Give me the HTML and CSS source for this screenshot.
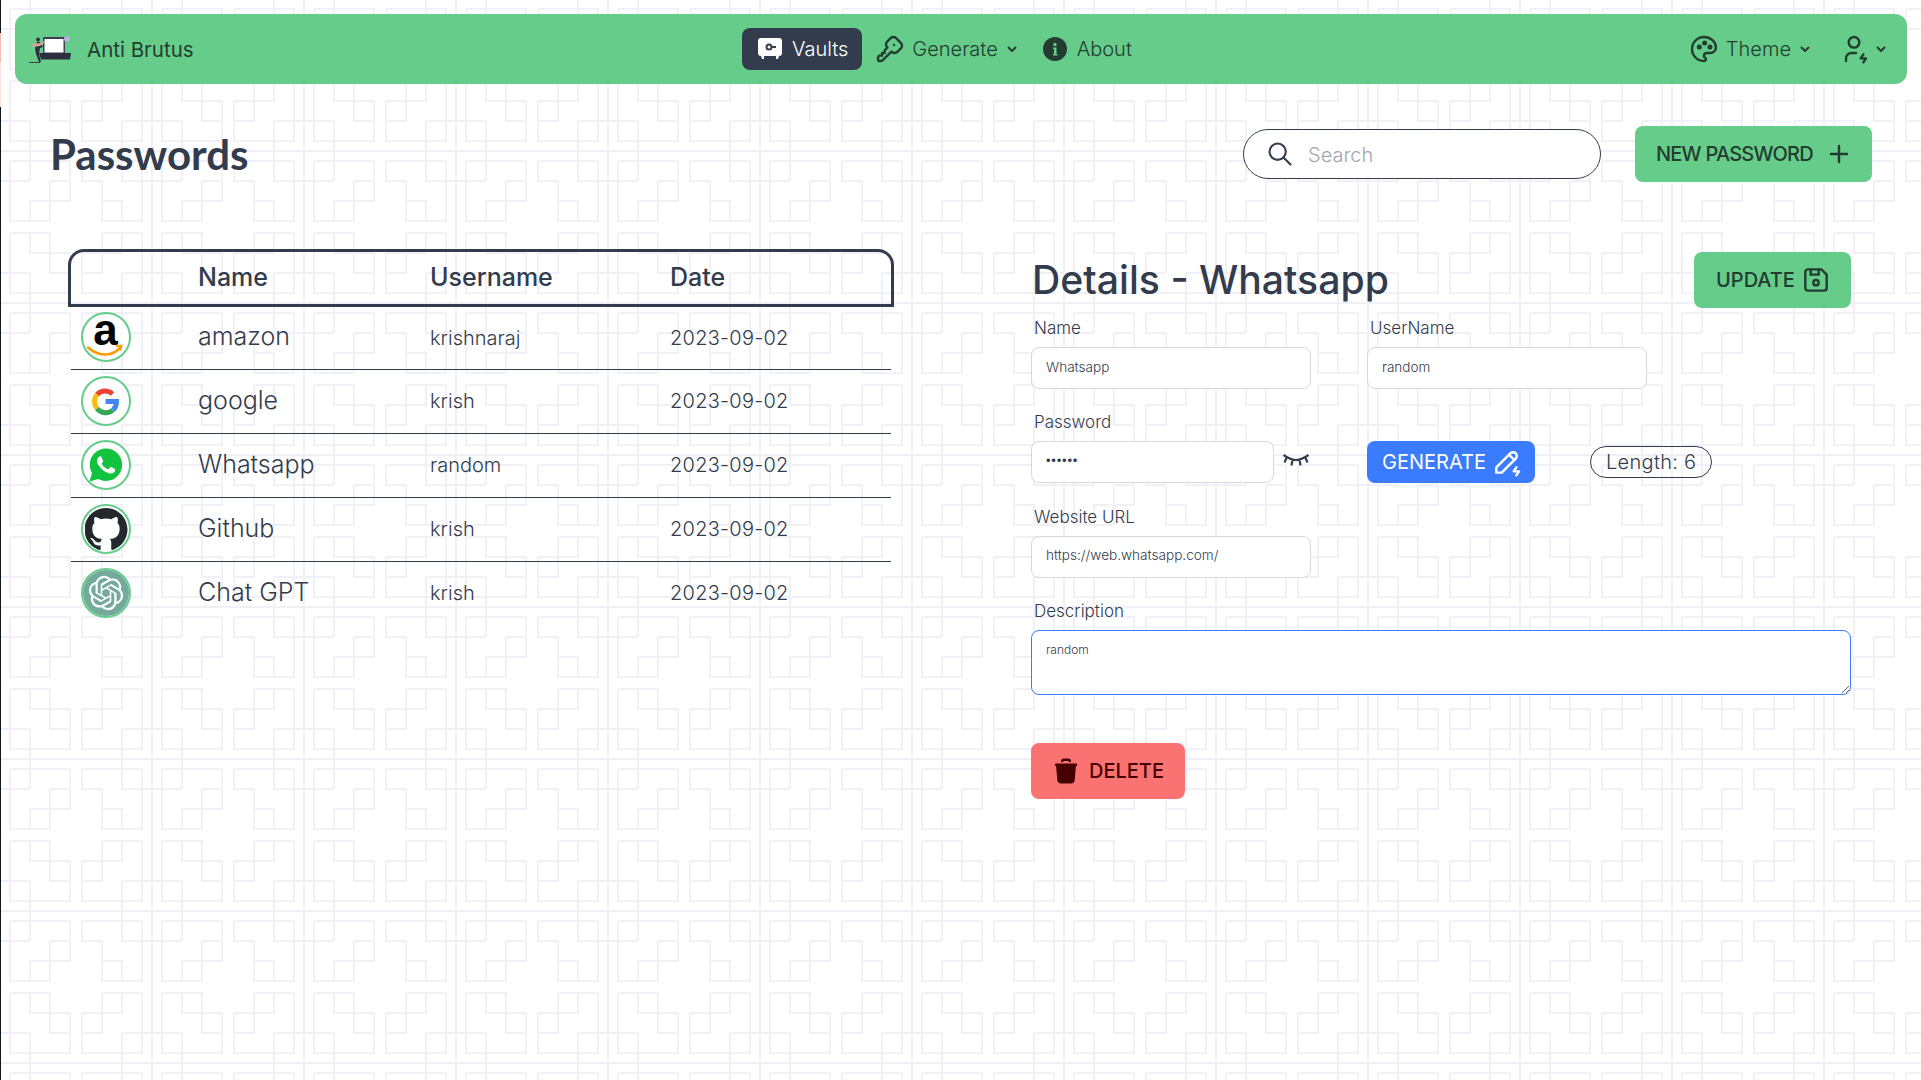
FILE: index.html

```html
<!DOCTYPE html>
<html lang="en">
<head>
    <meta charset="UTF-8">
    <meta name="viewport" content="width=device-width, initial-scale=1.0">
    <title>Anti Brutus</title>
    <link rel="stylesheet" href="styles.css">
</head>
<body>

    <nav class="navbar">
        <div class="nav-start">
            <svg class="logo" viewBox="0 0 42 27">
                <rect x="14" y="1" width="22" height="17" rx="1" fill="#3f3d56"/>
                <rect x="15.5" y="3" width="19" height="13.5" fill="#fff"/>
                <path d="M10 17h32l-1 6.500h-29z" fill="#2f2e41"/>
                <circle cx="38" cy="3" r="3" fill="#b4b4d8"/>
                <circle cx="9" cy="3.500" r="2" fill="#2f2e41"/>
                <path d="M8 6h3l3 5-3 1-1 6 2 8h-2l-3-8-1-6z" fill="#2f2e41"/>
                <path d="M3 8l8-1 4-2 1 1-5 4-7 1z" fill="#d9a594"/>
                <path d="M0 26.500h11" stroke="#3f3d56"/>
            </svg>
            <span class="brand">Anti Brutus</span>
        </div>
        <div class="nav-center">
            <a class="nav-item active">
                <svg class="nav-icon" viewBox="0 0 24 24">
                    <rect x="0" y="1" width="24" height="18" rx="3" fill="#fff"/>
                    <path d="M3 19h3v3h-2zM18 19h3l-1 3h-2z" fill="#fff"/>
                    <circle cx="11" cy="10" r="2.500" fill="none" stroke="#333c4d" stroke-width="2"/>
                    <path d="M13 10h5" stroke="#333c4d" stroke-width="2"/>
                </svg>
                Vaults
            </a>
            <a class="nav-item">
                <svg class="nav-icon line" viewBox="0 0 24 24">
                    <path d="M16.555 3.843l3.602 3.602a2.877 2.877 0 0 1 0 4.069l-2.643 2.643a2.877 2.877 0 0 1 -4.069 0l-.301 -.301l-6.558 6.558a2 2 0 0 1 -1.239 .578l-.175 .008h-1.172a1 1 0 0 1 -.993 -.883l-.007 -.117v-1.172a2 2 0 0 1 .467 -1.284l.119 -.13l.414 -.414h2v-2h2v-2l2.144 -2.144l-.301 -.301a2.877 2.877 0 0 1 0 -4.069l2.643 -2.643a2.877 2.877 0 0 1 4.069 0z"/>
                    <path d="M15 9h.01"/>
                </svg>
                Generate
                <svg class="chevron" viewBox="0 0 10 6"><path d="M1 1l4 4 4-4"/></svg>
            </a>
            <a class="nav-item">
                <svg class="nav-icon" viewBox="0 0 24 24">
                    <circle cx="12" cy="12" r="12" fill="#223d30"/>
                    <circle cx="12" cy="7.500" r="1.700" fill="#66cc8a"/>
                    <path d="M10 10.500h3.500v6.500h1v1.500h-4.500v-1.500h1v-5h-1z" fill="#66cc8a"/>
                </svg>
                About
            </a>
        </div>
        <div class="nav-end">
            <a class="nav-item">
                <svg class="nav-icon line" viewBox="0 0 24 24">
                    <path d="M12 21a9 9 0 0 1 0 -18c4.970 0 9 3.582 9 8c0 1.060 -.474 2.078 -1.318 2.828c-.844 .75 -1.989 1.172 -3.182 1.172h-2.500a2 2 0 0 0 -1 3.750a1.300 1.300 0 0 1 -1 2.250"/>
                    <path d="M8.500 10.500m-1 0a1 1 0 1 0 2 0a1 1 0 1 0 -2 0"/>
                    <path d="M12.500 7.500m-1 0a1 1 0 1 0 2 0a1 1 0 1 0 -2 0"/>
                    <path d="M16.500 10.500m-1 0a1 1 0 1 0 2 0a1 1 0 1 0 -2 0"/>
                </svg>
                Theme
                <svg class="chevron" viewBox="0 0 10 6"><path d="M1 1l4 4 4-4"/></svg>
            </a>
            <a class="nav-item user-menu">
                <svg class="nav-icon line" viewBox="0 0 24 24">
                    <path d="M8 7a4 4 0 1 0 8 0a4 4 0 0 0 -8 0"/>
                    <path d="M6 21v-2a4 4 0 0 1 4 -4h3.500"/>
                    <path d="M19 16l-2 3h4l-2 3"/>
                </svg>
                <svg class="chevron" viewBox="0 0 10 6"><path d="M1 1l4 4 4-4"/></svg>
            </a>
        </div>
    </nav>

    <header class="page-header">
        <h1>Passwords</h1>
        <label class="search">
            <svg class="search-icon line" viewBox="0 0 24 24">
                <path d="M10 10m-7 0a7 7 0 1 0 14 0a7 7 0 1 0 -14 0"/>
                <path d="M21 21l-6 -6"/>
            </svg>
            <input type="text" placeholder="Search">
        </label>
        <button class="btn btn-primary new-btn">
            NEW PASSWORD
            <svg class="btn-icon line" viewBox="0 0 24 24"><path d="M12 6v12M6 12h12"/></svg>
        </button>
    </header>

    <main class="content">
        <section class="vault">
            <table class="vault-table">
                <colgroup>
                    <col class="col-logo">
                    <col class="col-name">
                    <col class="col-user">
                    <col class="col-date">
                </colgroup>
                <thead>
                    <tr>
                        <th></th>
                        <th>Name</th>
                        <th>Username</th>
                        <th>Date</th>
                    </tr>
                </thead>
                <tbody>
                    <tr>
                        <td class="cell-logo">
                            <div class="avatar">
                                <svg class="icon-amazon" viewBox="0 0 46 46">
                                    <text class="amazon-a" x="22.500" y="30.500" text-anchor="middle">a</text>
                                    <path d="M5 33.500c9 8 24 11 33-1" fill="none" stroke="#f90" stroke-width="2.500" stroke-linecap="round"/>
                                    <path d="M33 32l5.500-.5-1 5" fill="none" stroke="#f90" stroke-width="1.800"/>
                                </svg>
                            </div>
                        </td>
                        <td class="cell-name">amazon</td>
                        <td class="cell-text">krishnaraj</td>
                        <td class="cell-text cell-date">2023-09-02</td>
                    </tr>
                    <tr>
                        <td class="cell-logo">
                            <div class="avatar">
                                <svg viewBox="0 0 46 46" fill="none" stroke-width="5">
                                    <g transform="translate(-1 .5)">
                                        <path d="M30.500 15.500a11 11 0 0 0-15.500 .5" stroke="#ea4335"/>
                                        <path d="M15 16a11 11 0 0 0 0 14" stroke="#fbbc05"/>
                                        <path d="M15 30a11 11 0 0 0 16 1.500" stroke="#34a853"/>
                                        <path d="M31 31.500a11 11 0 0 0 3.500-8.500h-11" stroke="#4285f4"/>
                                    </g>
                                </svg>
                            </div>
                        </td>
                        <td class="cell-name">google</td>
                        <td class="cell-text">krish</td>
                        <td class="cell-text cell-date">2023-09-02</td>
                    </tr>
                    <tr>
                        <td class="cell-logo">
                            <div class="avatar">
                                <svg class="icon-whatsapp" viewBox="0 0 24 24">
                                    <path d="M12 1C6 1 1.200 5.800 1.200 11.800c0 1.900.5 3.800 1.500 5.400L1 23l5.900-1.600c1.600.9 3.300 1.300 5.100 1.300 6 0 10.800-4.800 10.800-10.800S18 1 12 1z" fill="#12c33f"/>
                                    <path d="M17.472 14.382c-.297-.149-1.758-.867-2.030-.967-.273-.099-.471-.148-.67.15-.197.297-.767.966-.94 1.164-.173.199-.347.223-.644.075-.297-.15-1.255-.463-2.390-1.475-.883-.788-1.480-1.761-1.653-2.059-.173-.297-.018-.458.13-.606.134-.133.298-.347.446-.52.149-.174.198-.298.298-.497.099-.198.05-.371-.025-.52-.075-.149-.669-1.612-.916-2.207-.242-.579-.487-.5-.669-.51-.173-.008-.371-.01-.57-.01-.198 0-.52.074-.792.372-.272.297-1.040 1.016-1.040 2.479 0 1.462 1.065 2.875 1.213 3.074.149.198 2.096 3.200 5.077 4.487.709.306 1.262.489 1.694.625.712.227 1.360.195 1.871.118.571-.085 1.758-.719 2.006-1.413.248-.694.248-1.289.173-1.413-.074-.124-.272-.198-.57-.347" fill="#fff"/>
                                </svg>
                            </div>
                        </td>
                        <td class="cell-name">Whatsapp</td>
                        <td class="cell-text">random</td>
                        <td class="cell-text cell-date">2023-09-02</td>
                    </tr>
                    <tr>
                        <td class="cell-logo">
                            <div class="avatar">
                                <svg class="icon-github" viewBox="0 0 24 24">
                                    <path fill="#24292e" d="M12 .297c-6.630 0-12 5.373-12 12 0 5.303 3.438 9.800 8.205 11.385.6.113.82-.258.82-.577 0-.285-.01-1.040-.015-2.040-3.338.724-4.042-1.610-4.042-1.610C4.422 18.070 3.633 17.700 3.633 17.700c-1.087-.744.084-.729.084-.729 1.205.084 1.838 1.236 1.838 1.236 1.070 1.835 2.809 1.305 3.495.998.108-.776.417-1.305.76-1.605-2.665-.3-5.466-1.332-5.466-5.930 0-1.310.465-2.380 1.235-3.220-.135-.303-.54-1.523.105-3.176 0 0 1.005-.322 3.300 1.230.96-.267 1.980-.399 3-.405 1.020.006 2.040.138 3 .405 2.280-1.552 3.285-1.230 3.285-1.230.645 1.653.24 2.873.12 3.176.765.84 1.230 1.910 1.230 3.220 0 4.610-2.805 5.625-5.475 5.920.42.36.81 1.096.81 2.220 0 1.606-.015 2.896-.015 3.286 0 .315.21.69.825.57C20.565 22.092 24 17.592 24 12.297c0-6.627-5.373-12-12-12"/>
                                </svg>
                            </div>
                        </td>
                        <td class="cell-name">Github</td>
                        <td class="cell-text">krish</td>
                        <td class="cell-text cell-date">2023-09-02</td>
                    </tr>
                    <tr>
                        <td class="cell-logo">
                            <div class="avatar">
                                <svg viewBox="-4 -4 32 32">
                                    <circle cx="12" cy="12" r="16" fill="#74aa9c"/>
                                    <path fill="#fff" d="M22.2819 9.8211a5.9847 5.9847 0 0 0-.5157-4.9108 6.0462 6.0462 0 0 0-6.5098-2.9A6.0651 6.0651 0 0 0 4.9807 4.1818a5.9847 5.9847 0 0 0-3.9977 2.9 6.0462 6.0462 0 0 0 .7427 7.0966 5.98 5.98 0 0 0 .511 4.9107 6.051 6.051 0 0 0 6.5146 2.9001A5.9847 5.9847 0 0 0 13.2599 24a6.0557 6.0557 0 0 0 5.7718-4.2058 5.9894 5.9894 0 0 0 3.9977-2.9001 6.0557 6.0557 0 0 0-.7475-7.0729zm-9.022 12.6081a4.4755 4.4755 0 0 1-2.8764-1.0408l.1419-.0804 4.7783-2.7582a.7948.7948 0 0 0 .3927-.6813v-6.7369l2.02 1.1686a.071.071 0 0 1 .038.052v5.5826a4.504 4.504 0 0 1-4.4945 4.4944zm-9.6607-4.1254a4.4708 4.4708 0 0 1-.5346-3.0137l.142.0852 4.783 2.7582a.7712.7712 0 0 0 .7806 0l5.8428-3.3685v2.3324a.0804.0804 0 0 1-.0332.0615L9.74 19.9502a4.4992 4.4992 0 0 1-6.1408-1.6464zM2.3408 7.8956a4.485 4.485 0 0 1 2.3655-1.9728V11.6a.7664.7664 0 0 0 .3879.6765l5.8144 3.3543-2.0201 1.1685a.0757.0757 0 0 1-.071 0l-4.8303-2.7865A4.504 4.504 0 0 1 2.3408 7.872zm16.5963 3.8558L13.1038 8.364 15.1192 7.2a.0757.0757 0 0 1 .071 0l4.8303 2.7913a4.4944 4.4944 0 0 1-.6765 8.1042v-5.6772a.79.79 0 0 0-.407-.667zm2.0107-3.0231l-.142-.0852-4.7735-2.7818a.7759.7759 0 0 0-.7854 0L9.409 9.2297V6.8974a.0662.0662 0 0 1 .0284-.0615l4.8303-2.7866a4.4992 4.4992 0 0 1 6.6802 4.66zM8.3065 12.863l-2.02-1.1638a.0804.0804 0 0 1-.038-.0567V6.0742a4.4992 4.4992 0 0 1 7.3757-3.4537l-.142.0805L8.704 5.459a.7948.7948 0 0 0-.3927.6813zm1.0976-2.3654l2.602-1.4998 2.6069 1.4998v2.9994l-2.5974 1.4997-2.6067-1.4997Z"/>
                                </svg>
                            </div>
                        </td>
                        <td class="cell-name">Chat GPT</td>
                        <td class="cell-text">krish</td>
                        <td class="cell-text cell-date">2023-09-02</td>
                    </tr>
                </tbody>
            </table>
        </section>

        <section class="details">
            <div class="details-head">
                <h2>Details - Whatsapp</h2>
                <button class="btn btn-primary update-btn">
                    UPDATE
                    <svg class="btn-icon line" viewBox="0 0 24 24">
                        <path d="M6 4h10l4 4v10a2 2 0 0 1 -2 2h-12a2 2 0 0 1 -2 -2v-12a2 2 0 0 1 2 -2"/>
                        <path d="M12 14m-2 0a2 2 0 1 0 4 0a2 2 0 1 0 -4 0"/>
                        <path d="M14 4l0 4l-6 0l0 -4"/>
                    </svg>
                </button>
            </div>

            <form class="details-form">
                <div class="field">
                    <label>Name</label>
                    <input class="input" type="text" value="Whatsapp">
                </div>
                <div class="field">
                    <label>UserName</label>
                    <input class="input" type="text" value="random">
                </div>

                <div class="field">
                    <label>Password</label>
                    <div class="password-row">
                        <input class="input password-input" type="password" value="random">
                        <svg class="eye" viewBox="0 0 26 13">
                            <path d="M.5 2c4 3 8 5 12.500 5s8.500-2 12.500-5M3.500 5L1.500 9.500M9.500 7L8.500 12.500M16.500 7L17.500 12.500M22.500 5L24.500 9.500"/>
                        </svg>
                    </div>
                </div>
                <div class="field">
                    <label class="label-spacer">&nbsp;</label>
                    <div class="generate-row">
                        <button type="button" class="btn btn-blue">
                            GENERATE
                            <svg class="btn-icon line" viewBox="0 0 24 24">
                                <path d="M4 20h4l10.500 -10.500a2.828 2.828 0 1 0 -4 -4l-10.500 10.500v4"/>
                                <path d="M13.500 6.500l4 4"/>
                                <path d="M19 16l-2 3h4l-2 3"/>
                            </svg>
                        </button>
                        <span class="badge">Length: 6</span>
                    </div>
                </div>

                <div class="field field-wide">
                    <label>Website URL</label>
                    <input class="input" type="text" value="https://web.whatsapp.com/">
                </div>

                <div class="field field-wide">
                    <label>Description</label>
                    <textarea class="textarea">random</textarea>
                </div>
            </form>

            <button class="btn btn-danger">
                <svg class="btn-icon" viewBox="0 0 24 24" fill="#470000">
                    <path d="M20 6a1 1 0 0 1 .117 1.993l-.117 .007h-.081l-.919 11a3 3 0 0 1 -2.824 2.995l-.176 .005h-8c-1.598 0 -2.904 -1.249 -2.992 -2.750l-.005 -.167l-.923 -11.083h-.08a1 1 0 0 1 -.117 -1.993l.117 -.007h16z"/>
                    <path d="M14 2a2 2 0 0 1 2 2a1 1 0 0 1 -1.993 .117l-.007 -.117h-4l-.007 .117a1 1 0 0 1 -1.993 -.117a2 2 0 0 1 1.850 -1.995l.15 -.005h4z"/>
                </svg>
                DELETE
            </button>
        </section>
    </main>

</body>
</html>
```

FILE: styles.css

```css
* {
    box-sizing: border-box;
}
html, body {
    margin: 0;
    padding: 0;
}
body {
    min-height: 100vh;
    overflow: hidden;
    font-family: 'Inter', 'Roboto', sans-serif;
    font-weight: 300;
    color: #333c4d;
    background-color: #fff;
    background-image:
        linear-gradient(#0f1a20 0 33px, #fbbcb0 33px 62px, #fde3de 62px 107px, #0f1a20 107px),
        url("data:image/svg+xml,%3Csvg xmlns='http://www.w3.org/2000/svg' width='152' height='152' fill='none' stroke='%23f1f0f7' stroke-width='2'%3E%3Cpath d='M0 0H152M0 0V152M0 152H152M152 0V152'/%3E%3Cpath d='M10 10H70V50H30V70M50 30H70M50 30V70M10 10V70H50M0 30H30M30 0V30'/%3E%3Cpath d='M82 10H142V70H102V30H82V10M102 50H122V70M122 0V30H152'/%3E%3Cpath d='M10 82H50V122H70M30 82V102H70V142H10V82M0 122H30V152'/%3E%3Cpath d='M102 82H142V142H82V102H122V82M102 82V122H82M122 122H152M122 122V152'/%3E%3C/svg%3E");
    background-size: 1px 100%, 152px 152px;
    background-position: 0 0, 0 -1px;
    background-repeat: no-repeat, repeat;
}

.line {
    fill: none;
    stroke: currentColor;
    stroke-width: 1.8;
    stroke-linecap: round;
    stroke-linejoin: round;
}

/* navbar */
.navbar {
    display: flex;
    align-items: center;
    height: 70px;
    margin: 14px 14px 0 15px;
    padding-left: 14px;
    background-color: #66cc8a;
    border-radius: 12px;
    color: #223d30;
}
.nav-start {
    display: flex;
    align-items: center;
    width: 713px;
}
.logo {
    width: 42px;
    height: 27px;
    margin-right: 16px;
}
.brand {
    font-size: 20.5px;
    font-weight: 400;
}
.nav-center {
    display: flex;
    align-items: center;
}
.nav-end {
    display: flex;
    align-items: center;
    margin-left: auto;
    margin-right: 11px;
}
.nav-item {
    display: flex;
    align-items: center;
    height: 42px;
    padding: 0 10px 0 16px;
    font-size: 20px;
    border-radius: 8px;
}
.nav-item.active {
    padding-right: 14px;
    background-color: #333c4d;
    color: #fff;
}
.nav-icon {
    width: 24px;
    height: 24px;
    margin-right: 10px;
}
.nav-icon.line {
    width: 32px;
    height: 32px;
    margin: 0 6px 0 -4px;
}
.chevron {
    width: 10px;
    height: 6px;
    margin-left: 9px;
    fill: none;
    stroke: currentColor;
    stroke-width: 2;
}
.user-menu {
    margin-left: 2px;
}
.user-menu .nav-icon.line {
    margin: 0 -3px 0 0;
}

/* page header */
.page-header {
    display: flex;
    align-items: center;
    height: 56px;
    margin-top: 42px;
    padding: 0 49px 0 50px;
}
.page-header h1 {
    margin: 0;
    font-family: 'Lato', sans-serif;
    font-size: 42px;
    font-weight: 700;
}
.search {
    display: flex;
    align-items: center;
    width: 358px;
    height: 50px;
    margin-left: auto;
    margin-right: 34px;
    padding-left: 22px;
    background-color: #fff;
    border: 1px solid #333c4d;
    border-radius: 25px;
}
.search-icon {
    width: 28px;
    height: 28px;
    margin-right: 14px;
}
.search input {
    flex: 1;
    min-width: 0;
    padding: 2px 0 0;
    border: none;
    outline: none;
    background: transparent;
    font-family: inherit;
    font-size: 20px;
    font-weight: 300;
}
.search input::placeholder {
    color: #a3a6af;
}

/* buttons */
.btn {
    display: flex;
    align-items: center;
    border: none;
    border-radius: 8px;
    font-family: inherit;
    font-size: 20px;
    font-weight: 500;
}
.btn-primary {
    height: 56px;
    background-color: #66cc8a;
    color: #223d30;
}
.btn-icon {
    width: 32px;
    height: 32px;
}
.new-btn {
    width: 237px;
    padding-left: 21px;
    letter-spacing: -0.8px;
}
.new-btn .btn-icon {
    margin-left: 10px;
}
.update-btn {
    width: 157px;
    padding-left: 22px;
}
.update-btn .btn-icon {
    margin-left: 5px;
}
.btn-blue {
    width: 168px;
    height: 42px;
    padding-left: 15px;
    background-color: #3b7cff;
    color: #fff;
    font-weight: 400;
}
.btn-blue .btn-icon {
    margin-left: 5px;
}
.btn-danger {
    width: 154px;
    height: 56px;
    margin-top: 48px;
    padding-left: 20px;
    background-color: #fb7272;
    color: #470000;
}
.btn-danger .btn-icon {
    width: 30px;
    height: 30px;
    margin-right: 8px;
}

/* layout */
.content {
    display: flex;
    align-items: flex-start;
    margin-top: 67px;
    padding-left: 68px;
}
.vault {
    width: 826px;
}

/* table */
.vault-table {
    width: 100%;
    table-layout: fixed;
    border-collapse: separate;
    border-spacing: 0;
}
.col-logo {
    width: 130px;
}
.col-name {
    width: 232px;
}
.col-user {
    width: 240px;
}
.vault-table th {
    height: 58px;
    padding: 0 0 2px;
    text-align: left;
    font-size: 25px;
    font-weight: 500;
    border-top: 3px solid #333c4d;
    border-bottom: 3px solid #333c4d;
}
.vault-table th:first-child {
    border-left: 3px solid #333c4d;
    border-top-left-radius: 16px;
}
.vault-table th:last-child {
    border-right: 3px solid #333c4d;
    border-top-right-radius: 16px;
}
.vault-table td {
    height: 64px;
    padding: 0;
    font-size: 20px;
    background: linear-gradient(#333c4d, #333c4d) left bottom / 100% 1px no-repeat;
}
.vault-table td:first-child {
    background-position: right bottom;
    background-size: calc(100% - 3px) 1px;
}
.vault-table td:last-child {
    background-position: left bottom;
    background-size: calc(100% - 3px) 1px;
}
.vault-table tbody tr:first-child td {
    height: 63px;
}
.vault-table tbody tr:last-child td {
    background: none;
}
.vault-table .cell-logo {
    padding-bottom: 3px;
}
.vault-table .cell-name {
    padding-bottom: 5px;
    font-size: 25px;
}
.vault-table .cell-text {
    padding-bottom: 2px;
}
.vault-table .cell-date {
    letter-spacing: 0.25px;
}
.avatar {
    width: 50px;
    height: 50px;
    margin-left: 13px;
    background-color: #fff;
    border: 2px solid #66cc8a;
    border-radius: 50%;
}
.avatar svg {
    display: block;
    width: 100%;
    height: 100%;
}
.avatar .icon-amazon {
    overflow: visible;
}
.avatar .icon-whatsapp {
    padding: 5px;
}
.avatar .icon-github {
    padding: 1.5px;
}
.amazon-a {
    font-family: 'Liberation Sans', sans-serif;
    font-size: 44px;
    font-weight: 700;
    fill: #000;
}

/* details */
.details {
    width: 820px;
    margin-left: 137px;
    padding-top: 3px;
}
.details-head {
    display: flex;
    align-items: center;
    justify-content: space-between;
    height: 56px;
}
.details-head h2 {
    margin: 0 0 2px 1px;
    font-size: 39.2px;
    font-weight: 500;
}
.details-form {
    display: grid;
    grid-template-columns: 336px 1fr;
    row-gap: 21.4px;
    margin-top: 8px;
}
.field label {
    display: block;
    height: 24px;
    margin-bottom: 7px;
    padding-left: 3px;
    font-size: 17px;
    line-height: 24px;
}
.field-wide {
    grid-column: 1 / 3;
}
.input {
    display: block;
    width: 280px;
    height: 42px;
    padding: 0 14px 3px;
    background-color: #fff;
    border: 1px solid #d8d8dc;
    border-radius: 8px;
    outline: none;
    font-family: inherit;
    font-size: 13.6px;
    font-weight: 300;
    color: #333c4d;
}
.password-row {
    display: flex;
    align-items: flex-start;
}
.password-input {
    width: 243px;
    font-family: 'Liberation Sans', sans-serif;
    font-size: 13px;
    letter-spacing: 0.8px;
}
.eye {
    width: 26px;
    height: 13px;
    margin: 12px 0 0 9px;
    fill: none;
    stroke: #333c4d;
    stroke-width: 2.2;
}
.generate-row {
    display: flex;
    align-items: center;
}
.badge {
    display: flex;
    align-items: center;
    height: 32px;
    margin-left: 55px;
    padding: 0 15px;
    border: 1px solid #333c4d;
    border-radius: 16px;
    font-size: 20px;
    letter-spacing: 0.3px;
}
.textarea {
    display: block;
    width: 820px;
    height: 65px;
    padding: 11px 14px;
    background-color: #fff;
    border: 1.5px solid #3b7cff;
    border-radius: 8px;
    outline: none;
    font-family: inherit;
    font-size: 12px;
    font-weight: 300;
    color: #333c4d;
}
```
